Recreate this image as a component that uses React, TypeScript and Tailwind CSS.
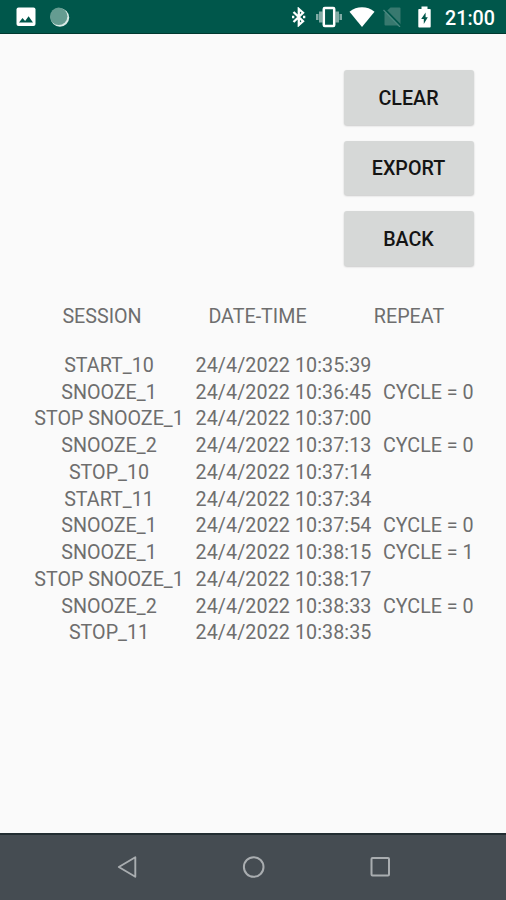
type LogEntry = {
    session: string;
    dateTime: string;
    repeat?: string;
};

const entries: LogEntry[] = [
    { session: "START_10", dateTime: "24/4/2022 10:35:39" },
    { session: "SNOOZE_1", dateTime: "24/4/2022 10:36:45", repeat: "CYCLE = 0" },
    { session: "STOP SNOOZE_1", dateTime: "24/4/2022 10:37:00" },
    { session: "SNOOZE_2", dateTime: "24/4/2022 10:37:13", repeat: "CYCLE = 0" },
    { session: "STOP_10", dateTime: "24/4/2022 10:37:14" },
    { session: "START_11", dateTime: "24/4/2022 10:37:34" },
    { session: "SNOOZE_1", dateTime: "24/4/2022 10:37:54", repeat: "CYCLE = 0" },
    { session: "SNOOZE_1", dateTime: "24/4/2022 10:38:15", repeat: "CYCLE = 1" },
    { session: "STOP SNOOZE_1", dateTime: "24/4/2022 10:38:17" },
    { session: "SNOOZE_2", dateTime: "24/4/2022 10:38:33", repeat: "CYCLE = 0" },
    { session: "STOP_11", dateTime: "24/4/2022 10:38:35" },
];

const StatusBar = () => (
    <header className="flex h-[34px] shrink-0 items-center border-b border-[#00392f] bg-[#00574b] pt-px pl-4 text-white">
        <svg width="20" height="20" viewBox="0 0 20 20">
            <rect x="0.5" y="0.5" width="19" height="18.5" rx="2" fill="#fff" />
            <path d="M3 15.5 6.5 11l2.6 3 3.5-4.8 4.4 6.3z" fill="#00574b" />
        </svg>
        <svg className="ml-[13px]" width="21" height="21" viewBox="0 0 21 21">
            <circle cx="10.9" cy="10.5" r="9.3" fill="#d9eae6" />
            <circle cx="9.7" cy="9.3" r="8.7" fill="#659c91" />
        </svg>

        <div className="ml-auto flex items-center pr-[10px]">
            <svg width="14" height="20" viewBox="0 0 14 20" fill="none" stroke="#fff" strokeWidth="2.3">
                <path d="M1.5 5 11 14.3 6.8 18V2L11 5.700 1.500 15" />
                <path d="M0 10h2.300M11 10h2.300" />
            </svg>
            <svg className="ml-[10px]" width="26" height="22" viewBox="0 0 26 22">
                <path d="M0 8h2.500v6H0zM3 5.500h3.500v11H3zM19.500 5.500H23v11h-3.500zM23.500 8H26v6h-2.500z" fill="#80aba5" />
                <rect x="7.800" y="2" width="10.400" height="18" rx="1" fill="none" stroke="#fff" strokeWidth="2.500" />
            </svg>
            <svg className="ml-[7px]" width="26" height="20" viewBox="0 0 26 20">
                <path d="M13 20 .5 4.700C4.200 1.600 8.400.2 13 .2s8.800 1.400 12.500 4.500z" fill="#fff" />
            </svg>
            <svg className="ml-[8px]" width="20" height="20" viewBox="0 0 20 20">
                <path d="M7.500 0.500h9q1 0 1 1v17H2.500q-1 0-1-1V6z" fill="#38796f" />
                <path d="M1.500 2 18.500 19.500" stroke="#00574b" strokeWidth="2" />
                <path d="M0.500 3 17 20" stroke="#4b8981" strokeWidth="1.200" />
            </svg>
            <svg className="ml-[15px]" width="13" height="22" viewBox="0 0 13 22">
                <path d="M3.500 0.500h6v2.500H12q.7 0 .7.800v16.800q0 .9-.8.900H1.100q-.8 0-.8-.9V3.800q0-.8.800-.800h2.400z" fill="#fff" />
                <path d="M7.600 6.500 3.200 13h2.600v5L9.800 11.300H7.600z" fill="#00574b" />
            </svg>
            <span className="ml-[14px] w-[51px] pt-[3px] text-[19.700px] font-medium leading-none whitespace-nowrap">21:00</span>
        </div>
    </header>
);

const ActionButton = ({ label }: { label: string }) => (
    <button className="h-[54.500px] w-[130px] rounded-[3px] bg-[#d6d8d7] pt-[3px] text-[19.700px] font-medium text-[#141414] shadow-[0_1px_2px_rgba(0,0,0,0.2)]">
        {label}
    </button>
);

const SessionLog = () => (
    <section className="mt-[38px] text-[19.700px] leading-[26.750px] whitespace-nowrap text-[#6e6e6e]">
        <div className="flex">
            <div className="ml-[32px] w-[140px] text-center">SESSION</div>
            <div className="ml-[16px] w-[139px] text-center">DATE-TIME</div>
            <div className="ml-[12px] w-[140px] text-center">REPEAT</div>
        </div>
        <div className="mt-[22.500px]">
            {entries.map((entry, idx) => (
                <div key={idx} className="flex h-[26.750px]">
                    <div className="ml-[29px] w-[160px] text-center">{entry.session}</div>
                    <div className="ml-[6.500px] w-[187.500px] tracking-[0.080px]">{entry.dateTime}</div>
                    <div>{entry.repeat}</div>
                </div>
            ))}
        </div>
    </section>
);

const NavigationBar = () => (
    <nav className="flex h-[67px] shrink-0 items-center justify-between border-t-2 border-[#222d32] bg-[#454c52] pr-[115px] pb-[2px] pl-[116px]">
        <svg width="22" height="24" viewBox="0 0 22 24" fill="none" stroke="#a9adb0" strokeWidth="1.900">
            <path d="M2.800 12 19.300 2.200v19.600z" strokeLinejoin="round" />
        </svg>
        <svg width="24" height="24" viewBox="0 0 24 24" fill="none" stroke="#a9adb0" strokeWidth="2">
            <circle cx="11.700" cy="12" r="9.800" />
        </svg>
        <svg width="22" height="24" viewBox="0 0 22 24" fill="none" stroke="#a9adb0" strokeWidth="2">
            <rect x="2.500" y="3" width="17.500" height="17.500" rx="1" />
        </svg>
    </nav>
);

const App = () => (
    <div className="flex h-[900px] w-[506px] flex-col overflow-hidden bg-[#fafafa] font-['Roboto',sans-serif]">
        <StatusBar />
        <main className="flex-1">
            <div className="mt-[36px] mr-[32.500px] flex flex-col items-end gap-[16px]">
                <ActionButton label="CLEAR" />
                <ActionButton label="EXPORT" />
                <ActionButton label="BACK" />
            </div>
            <SessionLog />
        </main>
        <NavigationBar />
    </div>
);

export default App;
